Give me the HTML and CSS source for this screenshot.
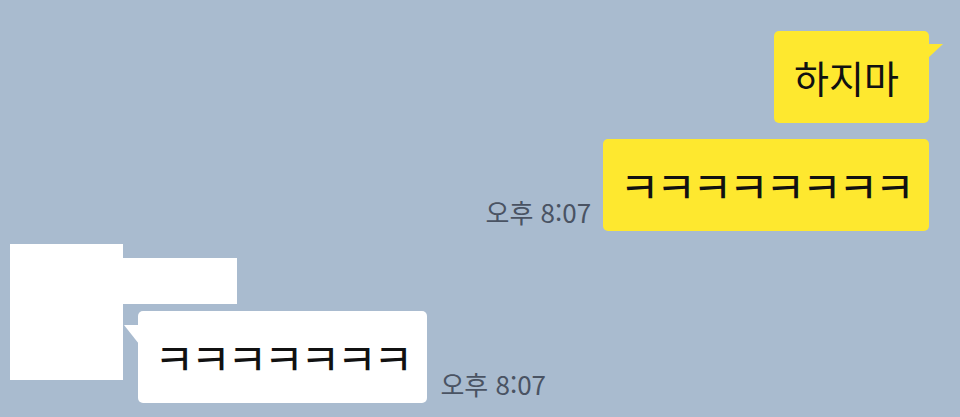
FILE: index.html
```html
<!DOCTYPE html>
<html lang="ko">
<head>
  <meta charset="UTF-8">
  <meta name="viewport" content="width=device-width, initial-scale=1.0">
  <title>채팅</title>
  <link rel="stylesheet" href="styles.css">
</head>
<body>
  <div class="chat">
    <div class="row mine">
      <div class="bubble mine-bubble tail">하지마</div>
    </div>
    <div class="row mine">
      <span class="time">오후 8:07</span>
      <div class="bubble mine-bubble laugh">ㅋㅋㅋㅋㅋㅋㅋㅋ</div>
    </div>
    <div class="row theirs">
      <div class="avatar"></div>
      <div class="theirs-body">
        <div class="name"></div>
        <div class="line">
          <div class="bubble theirs-bubble tail laugh">ㅋㅋㅋㅋㅋㅋㅋ</div>
          <span class="time">오후 8:07</span>
        </div>
      </div>
    </div>
  </div>
</body>
</html>
```

FILE: styles.css
```css
body {
  margin: 0;
  background-color: #a9bbcf;
  font-family: 'Noto Sans CJK KR', 'Noto Sans', sans-serif;
  color: #111;
}
.chat {
  display: flex;
  flex-direction: column;
  padding: 31px 31px 0 10px;
}
.row {
  display: flex;
  align-items: flex-end;
}
.row.mine {
  justify-content: flex-end;
  gap: 12px;
  margin-bottom: 16px;
}
.row.theirs {
  align-items: flex-start;
  margin-top: -3px;
}
.bubble {
  position: relative;
  font-size: 38px;
  line-height: 52px;
  padding: 20px 30px 20px 20px;
  border-radius: 5px;
  white-space: nowrap;
}
.bubble.laugh {
  font-size: 44px;
  letter-spacing: -4px;
  padding: 20px 18px 20px 16px;
}
.mine-bubble {
  background-color: #fee82f;
}
.theirs-bubble {
  background-color: #fff;
}
.mine-bubble.tail::after {
  content: "";
  position: absolute;
  top: 13px;
  right: -14px;
  width: 15px;
  height: 14px;
  background-color: #fee82f;
  clip-path: polygon(0 0, 100% 0, 0 100%);
}
.theirs-bubble.tail::before {
  content: "";
  position: absolute;
  top: 14px;
  left: -14px;
  width: 15px;
  height: 19px;
  background-color: #fff;
  clip-path: polygon(0 0, 100% 0, 100% 100%);
}
.time {
  font-size: 26px;
  line-height: 30px;
  color: #4a5363;
  margin-bottom: 4px;
}
.avatar {
  width: 113px;
  height: 136px;
  background-color: #fff;
}
.theirs-body {
  display: flex;
  flex-direction: column;
  margin-top: 14px;
}
.name {
  width: 114px;
  height: 46px;
  background-color: #fff;
}
.line {
  display: flex;
  align-items: flex-end;
  gap: 13px;
  margin: 7px 0 0 15px;
}
```
